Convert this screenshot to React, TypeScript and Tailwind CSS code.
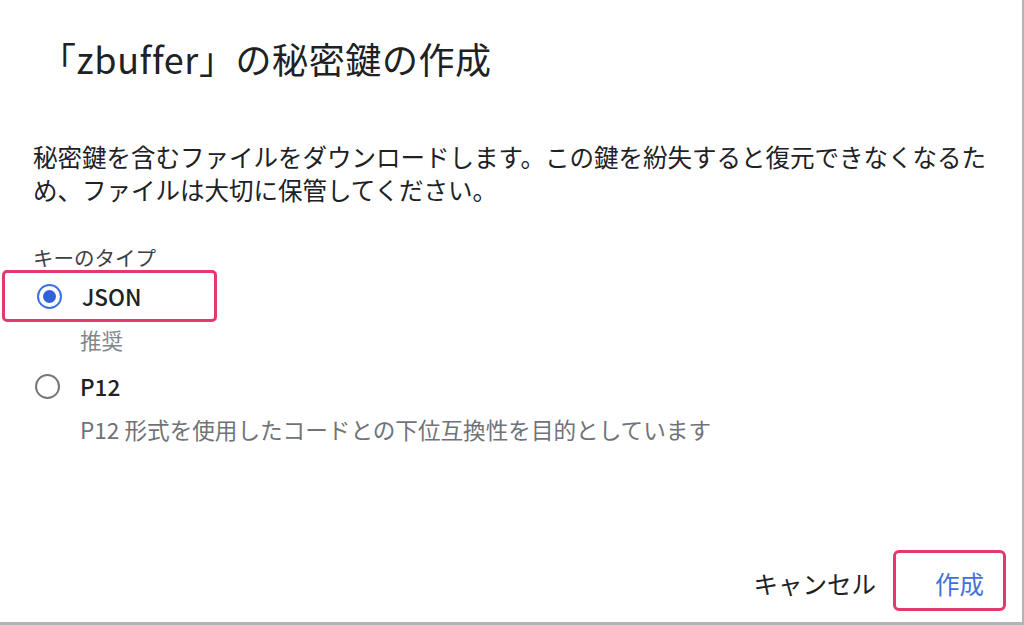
import React from "react";

const FONT = '"Noto Sans CJK JP", "Noto Sans", sans-serif';

export default function App() {
  return (
    <div
      className="w-[1024px] h-[625px] bg-white border-r-2 border-b-[3px] border-[#b4b4b4] flex flex-col text-[#202124] overflow-hidden"
      style={{ fontFamily: FONT }}
    >
      <h1 className="pt-[34px] pl-[40px] text-[36px] leading-[48px] font-normal tracking-[0.6px]">
        「zbuffer」の秘密鍵の作成
      </h1>

      <p className="mt-[58px] pl-[33px] w-[995px] text-[24.5px] leading-[33px]">
        秘密鍵を含むファイルをダウンロードします。この鍵を紛失すると復元できなくなるため、ファイルは大切に保管してください。
      </p>

      <div className="mt-[38px] pl-[33px] text-[20.5px] leading-[26px] text-[#3c4043]">
        キーのタイプ
      </div>

      <div className="ml-[2px] w-[215px] h-[52px] border-[3px] border-[#e33a6e] rounded-[5px] flex items-center">
        <span className="ml-[32px] w-[25px] h-[25px] rounded-full border-[2.5px] border-[#3b70e0] flex items-center justify-center">
          <span className="w-[13px] h-[13px] rounded-full bg-[#2f63d6]" />
        </span>
        <span className="ml-[20px] text-[22.5px] font-medium leading-none">JSON</span>
      </div>

      <div className="mt-[4px] pl-[80px] text-[21.5px] leading-[28px] text-[#80868b]">推奨</div>

      <div className="mt-[12px] h-[40px] pl-[35px] flex items-center">
        <span className="w-[25px] h-[25px] rounded-full border-[2.5px] border-[#777]" />
        <span className="ml-[20px] text-[22.5px] font-medium leading-none">P12</span>
      </div>

      <div className="mt-[9px] pl-[80px] text-[22.6px] leading-[30px] text-[#6f7378]">
        P12 形式を使用したコードとの下位互換性を目的としています
      </div>

      <div className="mt-auto mb-[11px] mr-[16px] flex items-center justify-end">
        <span className="pt-[8px] text-[24.5px] leading-none text-[#202124]">キャンセル</span>
        <div className="ml-[17px] w-[113px] h-[61px] border-[3px] border-[#e33a6e] rounded-[6px] flex items-center pl-[39px] pt-[8px]">
          <span className="text-[24.5px] leading-none text-[#3f72dc]">作成</span>
        </div>
      </div>
    </div>
  );
}
